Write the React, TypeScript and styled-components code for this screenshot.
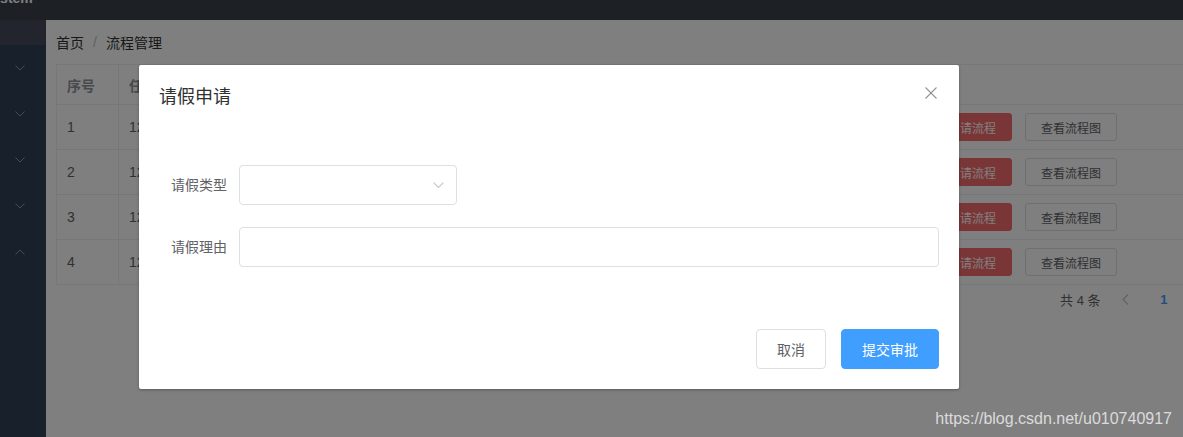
import React from "react";
import styled, { createGlobalStyle } from "styled-components";

const Global = createGlobalStyle`
  html, body { margin: 0; padding: 0; }
  body {
    font-family: "Liberation Sans", "Noto Sans CJK SC", sans-serif;
    background: #fff;
  }
  * { box-sizing: border-box; }
`;

const Screen = styled.div`
  position: relative;
  width: 1183px;
  height: 437px;
  overflow: hidden;
  background: #fff;
`;

const TopBar = styled.header`
  height: 20px;
  background: #3a4048;
  overflow: hidden;
  display: flex;
  align-items: flex-start;
`;

const BrandText = styled.div`
  margin: -9px 0 0 -17px;
  font-size: 14px;
  line-height: 14px;
  font-weight: 700;
  color: #fff;
`;

const Layout = styled.div`
  display: flex;
  height: 417px;
`;

const Sidebar = styled.nav`
  width: 46px;
  flex: none;
  background: #304156;
  display: flex;
  flex-direction: column;
`;

const SideTop = styled.div`
  height: 25px;
  background: #454b5d;
`;

const SideItem = styled.div`
  height: 46px;
  display: flex;
  align-items: center;
  justify-content: center;
  padding-right: 6px;
`;

const Main = styled.main`
  flex: 1;
  min-width: 0;
  overflow: hidden;
  padding-left: 10px;
`;

const Crumbs = styled.div`
  height: 44px;
  display: flex;
  align-items: center;
  font-size: 14px;
  color: #303133;
`;

const CrumbSep = styled.span`
  margin: 0 9px;
  color: #c0c4cc;
`;

const Table = styled.div`
  width: 1166px;
  border-left: 1px solid #ebeef5;
  border-top: 1px solid #ebeef5;
  font-size: 14px;
`;

const Row = styled.div<{ $head?: boolean }>`
  display: grid;
  grid-template-columns: 62px 220px 260px 299px 1fr;
  height: ${(p) => (p.$head ? "40px" : "45px")};
  color: ${(p) => (p.$head ? "#909399" : "#606266")};
  font-weight: ${(p) => (p.$head ? 700 : 400)};
`;

const Cell = styled.div`
  display: flex;
  align-items: center;
  padding: 0 10px;
  border-right: 1px solid #ebeef5;
  border-bottom: 1px solid #ebeef5;
  white-space: nowrap;
  overflow: hidden;
`;

const SmallBtn = styled.button<{ $danger?: boolean }>`
  height: 28px;
  padding: 0 15px;
  font-size: 12px;
  font-family: inherit;
  border-radius: 3px;
  border: 1px solid ${(p) => (p.$danger ? "#f56c6c" : "#dcdfe6")};
  background: ${(p) => (p.$danger ? "#f56c6c" : "#fff")};
  color: ${(p) => (p.$danger ? "#fff" : "#606266")};
  & + & { margin-left: 13px; }
`;

const Pager = styled.div`
  width: 1166px;
  height: 28px;
  display: flex;
  justify-content: flex-end;
  align-items: center;
  padding-right: 5px;
  font-size: 13px;
  color: #606266;
`;

const Total = styled.span`
  margin-right: 10px;
`;

const PagerBtn = styled.div<{ $active?: boolean; $pr?: number }>`
  width: 35.5px;
  height: 28px;
  display: flex;
  align-items: center;
  justify-content: center;
  padding-right: ${(p) => p.$pr ?? 0}px;
  font-weight: 700;
  color: ${(p) => (p.$active ? "#409eff" : "#c0c4cc")};
`;

const Overlay = styled.div`
  position: absolute;
  inset: 0;
  background: rgba(0, 0, 0, 0.5);
`;

const Dialog = styled.div`
  position: relative;
  width: 820px;
  margin: 65px 0 0 139px;
  background: #fff;
  border-radius: 2px;
  box-shadow: 0 1px 3px rgba(0, 0, 0, 0.3);
`;

const DialogHead = styled.div`
  padding: 20px 20px 10px;
  font-size: 18px;
  line-height: 24px;
  color: #303133;
`;

const CloseBtn = styled.div`
  position: absolute;
  top: 20px;
  right: 20px;
  width: 16px;
  height: 16px;
  display: flex;
  align-items: center;
  justify-content: center;
`;

const DialogBody = styled.div`
  padding: 46px 20px 30px;
`;

const FormItem = styled.div`
  display: flex;
  margin-bottom: 22px;
`;

const Label = styled.label`
  width: 80px;
  flex: none;
  padding-right: 12px;
  text-align: right;
  font-size: 14px;
  line-height: 40px;
  color: #606266;
`;

const Field = styled.div<{ $w?: string }>`
  position: relative;
  width: ${(p) => p.$w ?? "100%"};
  height: 40px;
  border: 1px solid #dcdfe6;
  border-radius: 4px;
  background: #fff;
`;

const Arrow = styled.div`
  position: absolute;
  right: 5px;
  top: 0;
  width: 25px;
  height: 38px;
  display: flex;
  align-items: center;
  justify-content: center;
`;

const DialogFoot = styled.div`
  display: flex;
  justify-content: flex-end;
  gap: 15px;
  padding: 10px 20px 20px;
`;

const Btn = styled.button<{ $primary?: boolean }>`
  height: 40px;
  padding: 0 20px;
  font-size: 14px;
  font-family: inherit;
  border-radius: 4px;
  border: 1px solid ${(p) => (p.$primary ? "#409eff" : "#dcdfe6")};
  background: ${(p) => (p.$primary ? "#409eff" : "#fff")};
  color: ${(p) => (p.$primary ? "#fff" : "#606266")};
`;

const Watermark = styled.div`
  position: absolute;
  right: 11px;
  bottom: 9px;
  font-family: "Liberation Sans", Arial, sans-serif;
  font-size: 16px;
  color: rgba(255, 255, 255, 0.72);
`;

const Chevron = ({ up, color, w = 10 }: { up?: boolean; color: string; w?: number }) => (
  <svg width={w} height={w / 2 + 1} viewBox="0 0 10 6" fill="none">
    <polyline
      points={up ? "0.5,5.5 5,1 9.5,5.5" : "0.5,0.5 5,5 9.5,0.5"}
      stroke={color}
      strokeWidth="1"
    />
  </svg>
);

const rows = [1, 2, 3, 4];

export default function App() {
  return (
    <Screen>
      <Global />
      <TopBar>
        <BrandText>System</BrandText>
      </TopBar>
      <Layout>
        <Sidebar>
          <SideTop />
          {[false, false, false, false, true].map((up, i) => (
            <SideItem key={i}>
              <Chevron up={up} color="#909399" />
            </SideItem>
          ))}
        </Sidebar>
        <Main>
          <Crumbs>
            <span>首页</span>
            <CrumbSep>/</CrumbSep>
            <span>流程管理</span>
          </Crumbs>
          <Table>
            <Row $head>
              <Cell>序号</Cell>
              <Cell>任务ID</Cell>
              <Cell>任务名称</Cell>
              <Cell>创建时间</Cell>
              <Cell>操作</Cell>
            </Row>
            {rows.map((n) => (
              <Row key={n}>
                <Cell>{n}</Cell>
                <Cell>{12500 + n * 7}</Cell>
                <Cell>请假流程</Cell>
                <Cell>2020-05-12 10:2{n}:00</Cell>
                <Cell>
                  <SmallBtn $danger>发起申请流程</SmallBtn>
                  <SmallBtn>查看流程图</SmallBtn>
                </Cell>
              </Row>
            ))}
          </Table>
          <Pager>
            <Total>共 4 条</Total>
            <PagerBtn $pr={6}>
              <svg width="7" height="11" viewBox="0 0 7 11" fill="none">
                <polyline points="6,0.5 1,5.5 6,10.5" stroke="#c0c4cc" strokeWidth="1.2" />
              </svg>
            </PagerBtn>
            <PagerBtn $active>1</PagerBtn>
            <PagerBtn>
              <svg width="7" height="11" viewBox="0 0 7 11" fill="none">
                <polyline points="1,0.5 6,5.5 1,10.5" stroke="#c0c4cc" strokeWidth="1.2" />
              </svg>
            </PagerBtn>
          </Pager>
        </Main>
      </Layout>
      <Overlay>
        <Dialog>
          <DialogHead>请假申请</DialogHead>
          <CloseBtn>
            <svg width="12" height="12" viewBox="0 0 12 12" fill="none">
              <line x1="0.5" y1="0.5" x2="11.5" y2="11.5" stroke="#909399" strokeWidth="1.1" />
              <line x1="11.5" y1="0.5" x2="0.5" y2="11.5" stroke="#909399" strokeWidth="1.1" />
            </svg>
          </CloseBtn>
          <DialogBody>
            <FormItem>
              <Label>请假类型</Label>
              <Field $w="218px">
                <Arrow>
                  <Chevron color="#c0c4cc" w={11} />
                </Arrow>
              </Field>
            </FormItem>
            <FormItem>
              <Label>请假理由</Label>
              <Field />
            </FormItem>
          </DialogBody>
          <DialogFoot>
            <Btn>取消</Btn>
            <Btn $primary>提交审批</Btn>
          </DialogFoot>
        </Dialog>
        <Watermark>https://blog.csdn.net/u010740917</Watermark>
      </Overlay>
    </Screen>
  );
}
